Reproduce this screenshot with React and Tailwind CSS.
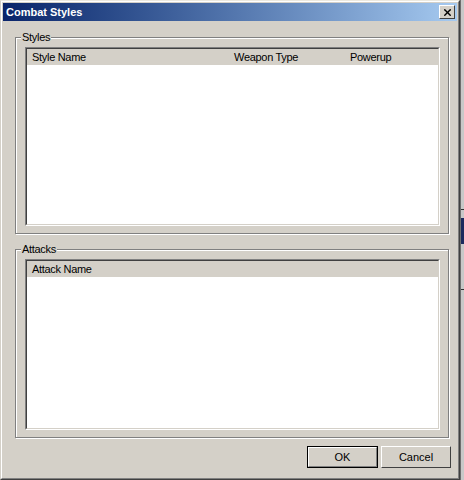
import { X } from 'lucide-react';

const face = 'bg-[#d4d0c8]';

function GroupBox({ label, height, listHeight, columns }) {
  return (
    <div
      className="relative ml-[12px] w-[434px] border border-[#808080] shadow-[inset_1px_1px_0_#fff,1px_1px_0_#fff] pl-[9px] pt-[9px]"
      style={{ height }}
    >
      <span className={`absolute left-[5px] top-[-7px] px-[1px] ${face} text-[11px] leading-[13px] tracking-[-0.3px] text-black`}>
        {label}
      </span>
      <div
        className="w-[415px] border-t-[#808080] border-l-[#808080] border-r-white border-b-white border bg-white"
        style={{ height: listHeight }}
      >
        <div className="h-full border border-t-[#404040] border-l-[#404040] border-r-[#d4d0c8] border-b-[#d4d0c8]">
          <div className={`flex h-[16px] ${face} text-[11px] leading-[16px] tracking-[-0.3px] text-black`}>
            {columns.map((c) => (
              <div key={c.name} className="pl-[5px]" style={{ width: c.width }}>
                {c.name}
              </div>
            ))}
          </div>
        </div>
      </div>
    </div>
  );
}

export default function App() {
  return (
    <div className="flex w-[464px] h-[480px] font-['Liberation_Sans',Arial,sans-serif] bg-[#c4c4c4]">
      <div className="w-[460px] h-[480px] border border-t-[#ece9e0] border-l-[#d4d0c8] border-r-[#404040] border-b-[#404040]">
        <div className={`h-full border border-t-white border-l-white border-r-[#808080] border-b-[#808080] ${face} p-[1px] flex flex-col`}>
          <div className="flex h-[18px] items-center justify-between bg-gradient-to-r from-[#0a246a] to-[#a6caf0] pl-[3px] pr-[2px]">
            <span className="text-[11px] font-bold text-white leading-[18px]">Combat Styles</span>
            <button
              type="button"
              className={`flex h-[14px] w-[16px] items-center justify-center ${face} border border-t-white border-l-white border-r-[#404040] border-b-[#404040]`}
            >
              <X size={11} strokeWidth={3} className="text-black" />
            </button>
          </div>

          <div className="mt-[16px]">
            <GroupBox
              label="Styles"
              height={197}
              listHeight={179}
              columns={[
                { name: 'Style Name', width: 202 },
                { name: 'Weapon Type', width: 116 },
                { name: 'Powerup', width: 90 },
              ]}
            />
          </div>

          <div className="mt-[15px]">
            <GroupBox
              label="Attacks"
              height={189}
              listHeight={171}
              columns={[{ name: 'Attack Name', width: 200 }]}
            />
          </div>

          <div className="mt-[8px] flex justify-end gap-[3px] pr-[6px]">
            <button
              type="button"
              className={`h-[22px] w-[71px] border border-black ${face} text-[11px] text-black`}
            >
              <div className="h-full border border-t-white border-l-white border-r-[#808080] border-b-[#808080] leading-[18px]">
                OK
              </div>
            </button>
            <button
              type="button"
              className={`h-[22px] w-[70px] border border-t-white border-l-white border-r-[#404040] border-b-[#404040] ${face} text-[11px] text-black leading-[20px]`}
            >
              Cancel
            </button>
          </div>
        </div>
      </div>
      <div className="flex w-[4px] flex-col bg-[#c8c8c8] border-l border-[#6e6e6e]">
        <div className="h-[209px]" />
        <div className="h-[1px] bg-[#303030]" />
        <div className="h-[8px]" />
        <div className="h-[26px] bg-[#1c2a5e]" />
        <div className="h-[45px]" />
        <div className="h-[1px] bg-[#303030]" />
      </div>
    </div>
  );
}
